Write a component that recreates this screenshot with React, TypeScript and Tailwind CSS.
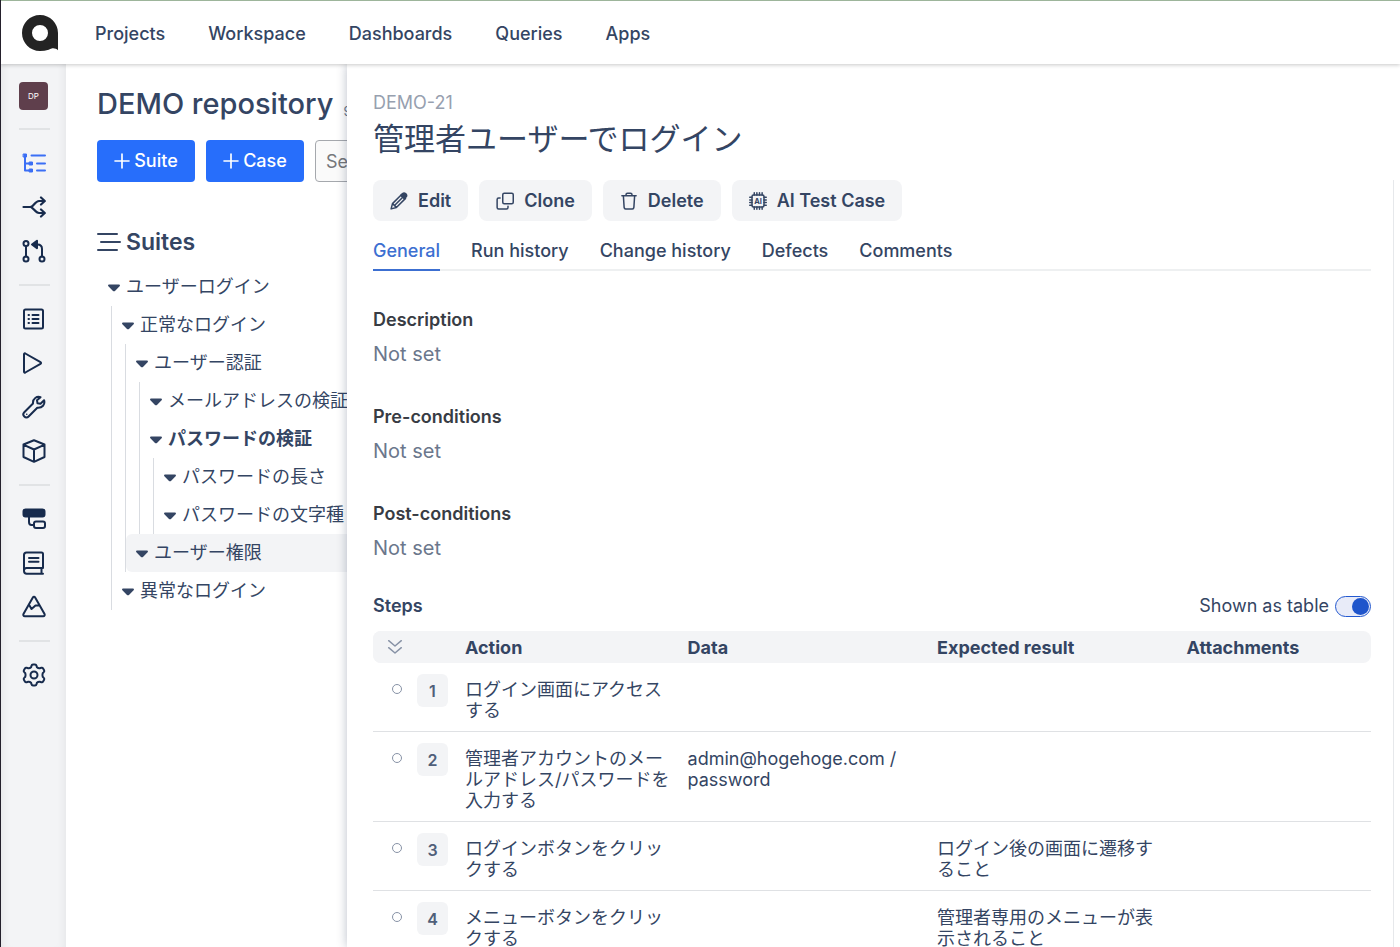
import React, { useState } from 'react';

interface IconProps {
  children: React.ReactNode;
  className?: string;
}

interface Suite {
  title: string;
  bold?: boolean;
  active?: boolean;
  children?: Suite[];
}

interface Step {
  action: string;
  data?: string;
  expected?: string;
}

const Icon: React.FC<IconProps> = ({ children, className = 'size-6' }) => (
  <svg
    className={`shrink-0 ${className}`}
    viewBox="0 0 24 24"
    fill="none"
    stroke="currentColor"
    strokeWidth={2}
    strokeLinecap="round"
    strokeLinejoin="round"
    aria-hidden="true"
  >
    {children}
  </svg>
);

const navItems = ['Projects', 'Workspace', 'Dashboards', 'Queries', 'Apps'];

const menuGroups = [
  [
    {
      label: 'Repository',
      active: true,
      icon: (
        <>
          <path d="M3 5v14.500h6M3 12.500h6M9.500 4.500h13.500M15 12.500h8M15 19.500h8" />
          <path d="M1.500 3h3v3h-3zM7.500 11h3v3h-3zM7.500 18h3v3h-3z" fill="currentColor" strokeWidth="1" />
        </>
      ),
    },
    {
      label: 'Shared steps',
      icon: <path strokeWidth="2.200" d="M1.500 12h7.500c3-1.500 4.500-6 8-6h5.500M9 12c3 1.500 4.500 6 8 6h5.500M19 2.500 22.800 6 19 9.500M19 14.500l3.800 3.500-3.800 3.500" />,
    },
    {
      label: 'Reviews',
      icon: (
        <>
          <circle cx="4" cy="4.500" r="2.500" />
          <circle cx="4" cy="20" r="2.500" />
          <circle cx="20" cy="20" r="2.500" />
          <path d="M4 7v10.500M20 17.500V10c0-3-1.500-4.500-4.500-4.500H13" />
          <path d="m15 1.800-5 3.700 5 3.700z" fill="currentColor" />
        </>
      ),
    },
  ],
  [
    {
      label: 'Test plans',
      icon: (
        <>
          <rect x="2" y="2.500" width="19" height="19" rx="1.500" />
          <path d="M6.500 8h.5M6.500 12h.5M6.500 16h.5M10.500 8h6M10.500 12h6M10.500 16h6" />
        </>
      ),
    },
    {
      label: 'Test runs',
      icon: <path d="M2 3.200v17.600c0 .8.700 1 1.300.700l15.200-8.700c.7-.4.7-1.200 0-1.600L3.300 2.500c-.6-.3-1.300-.1-1.300.7z" />,
    },
    {
      label: 'Configurations',
      icon: (
        <>
          <path d="M18.500 2.200c-3.500-1.200-8 1.300-7.500 6.300L2.300 17.200a3 3 0 0 0 4.300 4.300L15.300 12.800c5 .5 8-3.500 6.800-7.500l-3.600 3.500-3-.500-.500-3z" />
          <path d="M4.700 19.300h.1" strokeWidth="1.500" />
        </>
      ),
    },
    {
      label: 'Environments',
      icon: <path d="M12 1.200 22.500 5.500v12.500L12 22.800 1.500 18V5.500zM1.800 5.800 12 10.500l10.200-4.700M12 10.500v12" />,
    },
  ],
  [
    {
      label: 'Requirements',
      icon: (
        <>
          <rect x="1.500" y="2.500" width="21" height="7" rx="2" fill="currentColor" />
          <rect x="12" y="14.500" width="11" height="6.500" rx="2" />
          <path d="M7 10v5c0 2 .8 3 2.500 3H12" />
        </>
      ),
    },
    {
      label: 'Documents',
      icon: <path d="M21 17V3c0-.9-.6-1.500-1.500-1.500H4.500C3 1.500 2 2.500 2 4v16c0 1.600 1 2.700 2.700 2.700H21M21 17H4.500A2.600 2.600 0 0 0 2 19.600M19.500 17v5.700M7 7h9.500M7 10.800h9.500" />,
    },
    {
      label: 'Traceability',
      icon: <path d="M10.700 2.700 1.600 18.800c-.7 1.300-.1 2.500 1.300 2.500h18.200c1.400 0 2-1.200 1.300-2.500L13.300 2.700c-.7-1.200-1.900-1.200-2.600 0zM7.500 10.500l2 3.500 4-3.500h3.500" />,
    },
  ],
  [
    {
      label: 'Settings',
      icon: (
        <>
          <circle cx="12" cy="12" r="3.500" />
          <path d="M9.500 2.700c.2-.8.700-1.200 1.500-1.200h2c.8 0 1.300.4 1.500 1.200l.4 1.500c1 .9 1.700 1.200 2.900 1l1.500-.4c.8-.2 1.400 0 1.800.7l1 1.700c.4.700.3 1.300-.3 1.900l-1.100 1.100c-.4 1.300-.4 2.300 0 3.600l1.100 1.100c.6.600.7 1.200.3 1.900l-1 1.700c-.4.700-1 .9-1.800.7l-1.500-.4c-1.200-.2-1.900.1-2.900 1l-.4 1.500c-.2.800-.7 1.200-1.500 1.200h-2c-.8 0-1.300-.4-1.500-1.200l-.4-1.500c-1-.9-1.700-1.200-2.900-1l-1.500.4c-.8.200-1.400 0-1.800-.7l-1-1.700c-.4-.7-.3-1.300.3-1.900l1.100-1.100c.4-1.300.4-2.300 0-3.600L2.200 9.100c-.6-.6-.7-1.200-.3-1.900l1-1.700c.4-.7 1-.9 1.800-.7l1.500.4c1.200.2 1.900-.1 2.900-1z" />
        </>
      ),
    },
  ],
];

const suites: Suite[] = [
  {
    title: 'ユーザーログイン',
    children: [
      {
        title: '正常なログイン',
        children: [
          {
            title: 'ユーザー認証',
            children: [
              { title: 'メールアドレスの検証' },
              {
                title: 'パスワードの検証',
                bold: true,
                children: [{ title: 'パスワードの長さ' }, { title: 'パスワードの文字種' }],
              },
            ],
          },
          { title: 'ユーザー権限', active: true },
        ],
      },
      { title: '異常なログイン' },
    ],
  },
];

const actions = [
  {
    label: 'Edit',
    icon: (
      <>
        <path d="m1.500 22.500 1.800-7L15.500 3.300l5.200 5.200L8.500 20.700zM3.500 15.500l5 5M7 17 17 7" />
        <path d="m14.500 4.500 2.300-2.300c1.700-1.700 3.200-.7 4.200.3s2 2.500.3 4.200L19 9z" fill="currentColor" />
      </>
    ),
  },
  {
    label: 'Clone',
    icon: (
      <>
        <rect x="9" y="1.500" width="14" height="14" rx="2" />
        <path d="M5.500 8H3.500c-1.300 0-2 .7-2 2v10.500c0 1.300.7 2 2 2H14c1.300 0 2-.7 2-2V19" />
      </>
    ),
  },
  {
    label: 'Delete',
    icon: <path d="M2.500 5h19M8 5V3.500C8 2.200 8.700 1.500 10 1.500h4c1.300 0 2 .7 2 2V5M4.500 5l1 15.500c.1 1.300.8 2 2 2h9c1.200 0 1.900-.7 2-2L19.500 5" />,
  },
  {
    label: 'AI Test Case',
    icon: (
      <>
        <rect x="4" y="4" width="16" height="16" rx="2" />
        <path d="M7 4V1M10.500 4V1M14 4V1M17.500 4V1M7 23v-3M10.500 23v-3M14 23v-3M17.500 23v-3M4 7H1M4 10.500H1M4 14H1M4 17.500H1M23 7h-3M23 10.500h-3M23 14h-3M23 17.500h-3" />
        <text x="12" y="15.500" textAnchor="middle" fontSize="10" fontWeight="700" fill="currentColor" stroke="none">
          AI
        </text>
      </>
    ),
  },
];

const tabs = ['General', 'Run history', 'Change history', 'Defects', 'Comments'];

const fields = ['Description', 'Pre-conditions', 'Post-conditions'];

const steps: Step[] = [
  { action: 'ログイン画面にアクセスする' },
  { action: '管理者アカウントのメールアドレス/パスワードを入力する', data: 'admin@hogehoge.com / password' },
  { action: 'ログインボタンをクリックする', expected: 'ログイン後の画面に遷移すること' },
  { action: 'メニューボタンをクリックする', expected: '管理者専用のメニューが表示されること' },
];

const SuiteList: React.FC<{ items: Suite[]; nested?: boolean }> = ({ items, nested }) => (
  <ul className={nested ? 'ml-[13px] border-l border-[#d9dce1]' : ''}>
    {items.map((item) => (
      <li key={item.title}>
        <button
          className={`flex h-[38px] w-full items-center gap-1.5 rounded-l-md pl-2.5 text-left whitespace-nowrap ${
            item.active ? 'bg-[#f3f4f6]' : ''
          } ${item.bold ? 'font-bold' : ''}`}
        >
          <svg className="mt-0.5 h-2 w-3 shrink-0" viewBox="0 0 12 8" fill="currentColor" aria-hidden="true">
            <path d="M1 .5h10c.9 0 1.300 1 .6 1.700L7 6.900c-.6.600-1.400.6-2 0L.4 2.200C-.3 1.500.1.5 1 .5z" />
          </svg>
          {item.title}
        </button>
        {item.children && <SuiteList items={item.children} nested />}
      </li>
    ))}
  </ul>
);

const Header: React.FC = () => (
  <header className="relative z-20 flex h-16 shrink-0 items-center border-t border-[#9db59b] bg-white pl-[21px] shadow-[0_1px_4px_rgba(0,0,0,0.22)]">
    <a href="#" aria-label="Home">
      <svg className="size-9" viewBox="0 0 36 36" aria-hidden="true">
        <path
          fill="#232323"
          fillRule="evenodd"
          d="M18 0c10 0 18 8 18 18v17.200c-1.800-1.600-4.200-2.300-6.300-1.700-1 .3-2 .8-3 1.300C24 35.600 21 36 18 36 8 36 0 28 0 18S8 0 18 0zm0 10a8 8 0 1 0 0 16 8 8 0 0 0 0-16z"
        />
      </svg>
    </a>
    <nav className="ml-[37px] flex gap-[43px] pt-0.5 font-medium">
      {navItems.map((item) => (
        <a key={item} href="#">
          {item}
        </a>
      ))}
    </nav>
  </header>
);

const Sidebar: React.FC = () => (
  <aside className="w-[65px] shrink-0 bg-[#f3f4f6] pt-[18px] text-[#172b4d] shadow-[inset_-8px_0_8px_-6px_rgba(0,0,0,0.06),inset_8px_0_8px_-6px_rgba(0,0,0,0.06)]">
    <button className="ml-[18px] flex h-7 w-[29px] items-center justify-center rounded bg-[#5f3f4c] text-[8px] text-white">
      DP
    </button>
    <div className="h-[7px]" />
    {menuGroups.map((group, i) => (
      <div key={i}>
        <div className="flex h-6 items-center pl-[18px]">
          <div className="h-0.5 w-[31px] bg-[#e1e3e5]" />
        </div>
        {group.map((item) => (
          <button
            key={item.label}
            aria-label={item.label}
            className={`flex h-11 w-full items-center pl-[21px] ${'active' in item && item.active ? 'text-[#3b6ff5]' : ''}`}
          >
            <Icon>{item.icon}</Icon>
          </button>
        ))}
      </div>
    ))}
  </aside>
);

const Repository: React.FC = () => (
  <section className="w-[281px] shrink-0 overflow-hidden pt-[21px] pl-[31px]">
    <div className="flex items-end gap-2.5 whitespace-nowrap">
      <h1 className="text-[29px] leading-[38px] font-medium">DEMO repository</h1>
      <span className="text-[13px] text-[#6b778c]">9 cases</span>
    </div>
    <div className="mt-[17px] flex gap-[11px]">
      {['Suite', 'Case'].map((label) => (
        <button
          key={label}
          className="flex h-[42px] w-[98px] shrink-0 items-center justify-center gap-1 rounded bg-[#276efb] font-medium text-white"
        >
          <Icon className="size-4">
            <path strokeWidth="2.500" d="M12 1.500v21M1.500 12h21" />
          </Icon>
          {label}
        </button>
      ))}
      <input
        type="search"
        aria-label="Search"
        placeholder="Search"
        className="h-[42px] w-[200px] shrink-0 rounded border border-[#a5a8ad] bg-[#fafafa] px-2.5 placeholder:text-[#75777b]"
      />
    </div>
    <h2 className="mt-[45px] flex items-center gap-[5px] text-[23px] leading-[30px] font-semibold">
      <Icon className="size-6">
        <path d="M1 4h19M4 12h19M1 20h19" />
      </Icon>
      Suites
    </h2>
    <div className="mt-[11px] pl-px">
      <SuiteList items={suites} />
    </div>
  </section>
);

const StepsTable: React.FC = () => (
  <table className="mt-[13px] w-full table-fixed border-separate border-spacing-0 leading-[21px]">
    <colgroup>
      <col className="w-[76px]" />
      <col className="w-[22.3%]" />
      <col className="w-[25%]" />
      <col className="w-[25%]" />
      <col />
    </colgroup>
    <thead>
      <tr className="h-8 bg-[#f3f4f6] text-left">
        <th className="rounded-l-lg bg-[#f3f4f6] pl-[14px]">
          <button aria-label="Expand all" className="flex text-[#8792a6]">
            <Icon className="size-4">
              <path strokeWidth="2.200" d="m2.500 2.500 9.500 8 9.500-8M2.500 13l9.500 8 9.500-8" />
            </Icon>
          </button>
        </th>
        <th className="pl-4 font-bold">Action</th>
        <th className="pl-4 font-bold">Data</th>
        <th className="pl-4 font-bold">Expected result</th>
        <th className="rounded-r-lg pl-4 font-bold">Attachments</th>
      </tr>
    </thead>
    <tbody className="align-top">
      {steps.map((step, i) => (
        <tr key={step.action}>
          <td className="border-b border-[#dfe1e4]">
            <div className="flex items-start pt-[11px]">
              <span className="mt-2.5 ml-[19px] size-2.5 rounded-full border border-[#8792a6]" />
              <span className="ml-[15px] flex h-[33px] w-[31px] items-center justify-center rounded-md bg-[#f3f4f6] text-base font-semibold text-[#505f79]">
                {i + 1}
              </span>
            </div>
          </td>
          <td className="border-b border-[#dfe1e4] pt-4 pb-2.5 pl-4">{step.action}</td>
          <td className="border-b border-[#dfe1e4] pt-4 pb-2.5 pl-4">{step.data}</td>
          <td className="border-b border-[#dfe1e4] pt-4 pb-2.5 pl-4">{step.expected}</td>
          <td className="border-b border-[#dfe1e4]" />
        </tr>
      ))}
    </tbody>
  </table>
);

const CaseDetails: React.FC = () => {
  const [tab, setTab] = useState('General');
  const [asTable, setAsTable] = useState(true);

  return (
    <main className="relative z-10 flex min-w-0 flex-1 flex-col bg-white pt-[27px] pl-[26px] shadow-[0_0_10px_rgba(9,30,66,0.28)]">
      <p className="leading-6 text-[#97a0af]">DEMO-21</p>
      <h2 className="text-[31px] leading-[48px]">管理者ユーザーでログイン</h2>
      <div className="mt-[17px] mr-1.5 min-h-0 flex-1 overflow-hidden border-r border-[#e6e8eb] pr-[22px]">
        <div className="flex gap-[11px]">
          {actions.map((action) => (
            <button
              key={action.label}
              className="flex h-[41px] items-center gap-2.5 rounded-lg bg-[#f3f4f6] px-[17px] font-semibold"
            >
              <Icon className="size-[18px]">{action.icon}</Icon>
              {action.label}
            </button>
          ))}
        </div>
        <div role="tablist" className="flex gap-[31px] border-b-2 border-[#eef0f1] pt-4">
          {tabs.map((name) => (
            <button
              key={name}
              role="tab"
              aria-selected={tab === name}
              onClick={() => setTab(name)}
              className={`-mb-0.5 h-[34px] border-b-2 pb-1 font-medium ${
                tab === name ? 'border-[#3c6fd1] text-[#3c6fd1]' : 'border-transparent'
              }`}
            >
              {name}
            </button>
          ))}
        </div>
        <div className="mt-[37px] flex flex-col gap-[37px]">
          {fields.map((field) => (
            <div key={field}>
              <h3 className="leading-6 font-semibold text-[#383c44]">{field}</h3>
              <p className="mt-2 text-xl leading-7 text-[#6b778c]">Not set</p>
            </div>
          ))}
        </div>
        <div className="mt-8 flex h-6 items-center justify-between">
          <h3 className="font-semibold">Steps</h3>
          <label className="flex items-center gap-1.5">
            Shown as table
            <input
              type="checkbox"
              role="switch"
              checked={asTable}
              onChange={() => setAsTable(!asTable)}
              className="h-[21px] w-9 appearance-none rounded-full border border-[#2459cf] bg-[#e8ebf8] before:mt-px before:ml-px before:block before:size-[17px] before:rounded-full before:bg-[#1f55cb] checked:before:ml-4"
            />
          </label>
        </div>
        <StepsTable />
      </div>
    </main>
  );
};

const App: React.FC = () => {
  return (
    <div className="flex h-screen flex-col overflow-hidden border-l border-[#24202c] bg-white font-[Inter,'Noto_Sans_CJK_JP',sans-serif] text-lg leading-6 text-[#344563]">
      <Header />
      <div className="flex min-h-0 flex-1">
        <Sidebar />
        <Repository />
        <CaseDetails />
      </div>
    </div>
  );
};

export default App;
